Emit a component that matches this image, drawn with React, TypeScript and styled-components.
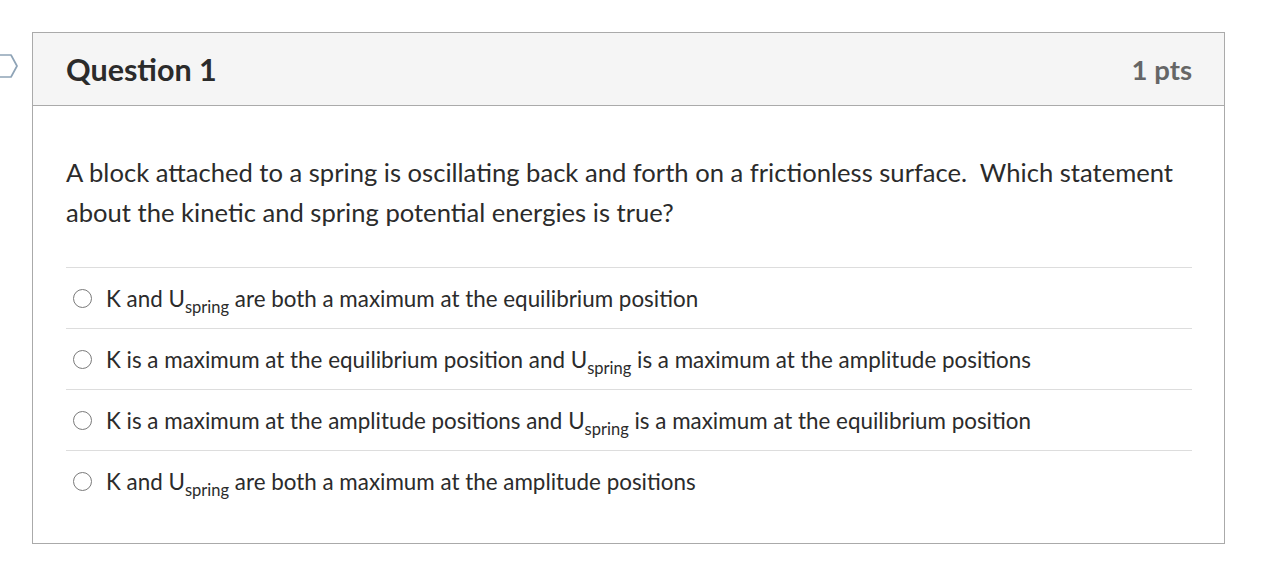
import React from 'react';
import styled, { createGlobalStyle } from 'styled-components';

const GlobalStyle = createGlobalStyle`
  body {
    margin: 0;
    background: #ffffff;
    font-family: Lato, "Noto Sans", "Liberation Sans", sans-serif;
    color: #2b2b2b;
  }
`;

interface Answer {
  id: string;
  before: string;
  after: string;
}

const answers: Answer[] = [
  { id: 'a', before: 'K and U', after: ' are both a maximum at the equilibrium position' },
  {
    id: 'b',
    before: 'K is a maximum at the equilibrium position and U',
    after: ' is a maximum at the amplitude positions',
  },
  {
    id: 'c',
    before: 'K is a maximum at the amplitude positions and U',
    after: ' is a maximum at the equilibrium position',
  },
  { id: 'd', before: 'K and U', after: ' are both a maximum at the amplitude positions' },
];

const App = () => {
  return (
    <>
      <GlobalStyle />
      <Page>
        <MarkerColumn>
          <Marker viewBox="0 0 20 26" aria-hidden>
            <path d="M-4 2 H11 L17 13 L11 24 H-4" fill="none" stroke="#8fa4b7" strokeWidth="1.7" strokeLinejoin="round" />
          </Marker>
        </MarkerColumn>
        <Card>
          <Header>
            <Title>Question 1</Title>
            <Points>1 pts</Points>
          </Header>
          <Body>
            <Prompt>
              A block attached to a spring is oscillating back and forth on a frictionless surface.&nbsp; Which
              statement about the kinetic and spring potential energies is true?
            </Prompt>
            <AnswerList>
              {answers.map(a => (
                <AnswerRow key={a.id}>
                  <Radio type="radio" name="q1" id={a.id} />
                  <AnswerLabel htmlFor={a.id}>
                    {a.before}
                    <Sub>spring</Sub>
                    {a.after}
                  </AnswerLabel>
                </AnswerRow>
              ))}
            </AnswerList>
          </Body>
        </Card>
      </Page>
    </>
  );
};

export default App;

const Page = styled.div`
  display: flex;
  padding-top: 32px;
`;

const MarkerColumn = styled.div`
  width: 32px;
  flex-shrink: 0;
  padding-top: 21px;
`;

const Marker = styled.svg`
  display: block;
  width: 20px;
  height: 26px;
`;

const Card = styled.div`
  width: 1193px;
  box-sizing: border-box;
  border: 1px solid #aaaaaa;
`;

const Header = styled.div`
  display: flex;
  align-items: center;
  justify-content: space-between;
  height: 73px;
  box-sizing: border-box;
  padding: 0 32px 0 33px;
  background: #f5f5f5;
  border-bottom: 1px solid #aaaaaa;
`;

const Title = styled.div`
  font-size: 30.5px;
  font-weight: 700;
  color: #2b2b2b;
`;

const Points = styled.div`
  font-size: 27.5px;
  font-weight: 700;
  color: #666666;
`;

const Body = styled.div`
  padding: 46px 32px 32px 33px;
`;

const Prompt = styled.p`
  margin: 0 0 35px;
  font-size: 25.6px;
  line-height: 40px;
`;

const AnswerList = styled.div`
  display: flex;
  flex-direction: column;
`;

const AnswerRow = styled.div`
  display: flex;
  align-items: center;
  height: 61px;
  box-sizing: border-box;
  border-top: 1px solid #dddddd;
  padding-left: 7px;
`;

const Radio = styled.input`
  appearance: none;
  margin: 0 14px 0 0;
  width: 19px;
  height: 19px;
  border: 1.5px solid #7a7a7a;
  border-radius: 50%;
  background: #ffffff;
  box-sizing: border-box;
`;

const AnswerLabel = styled.label`
  font-size: 22.4px;
  color: #2b2b2b;
`;

const Sub = styled.sub`
  font-size: 16.5px;
  vertical-align: -6px;
  line-height: 0;
`;
